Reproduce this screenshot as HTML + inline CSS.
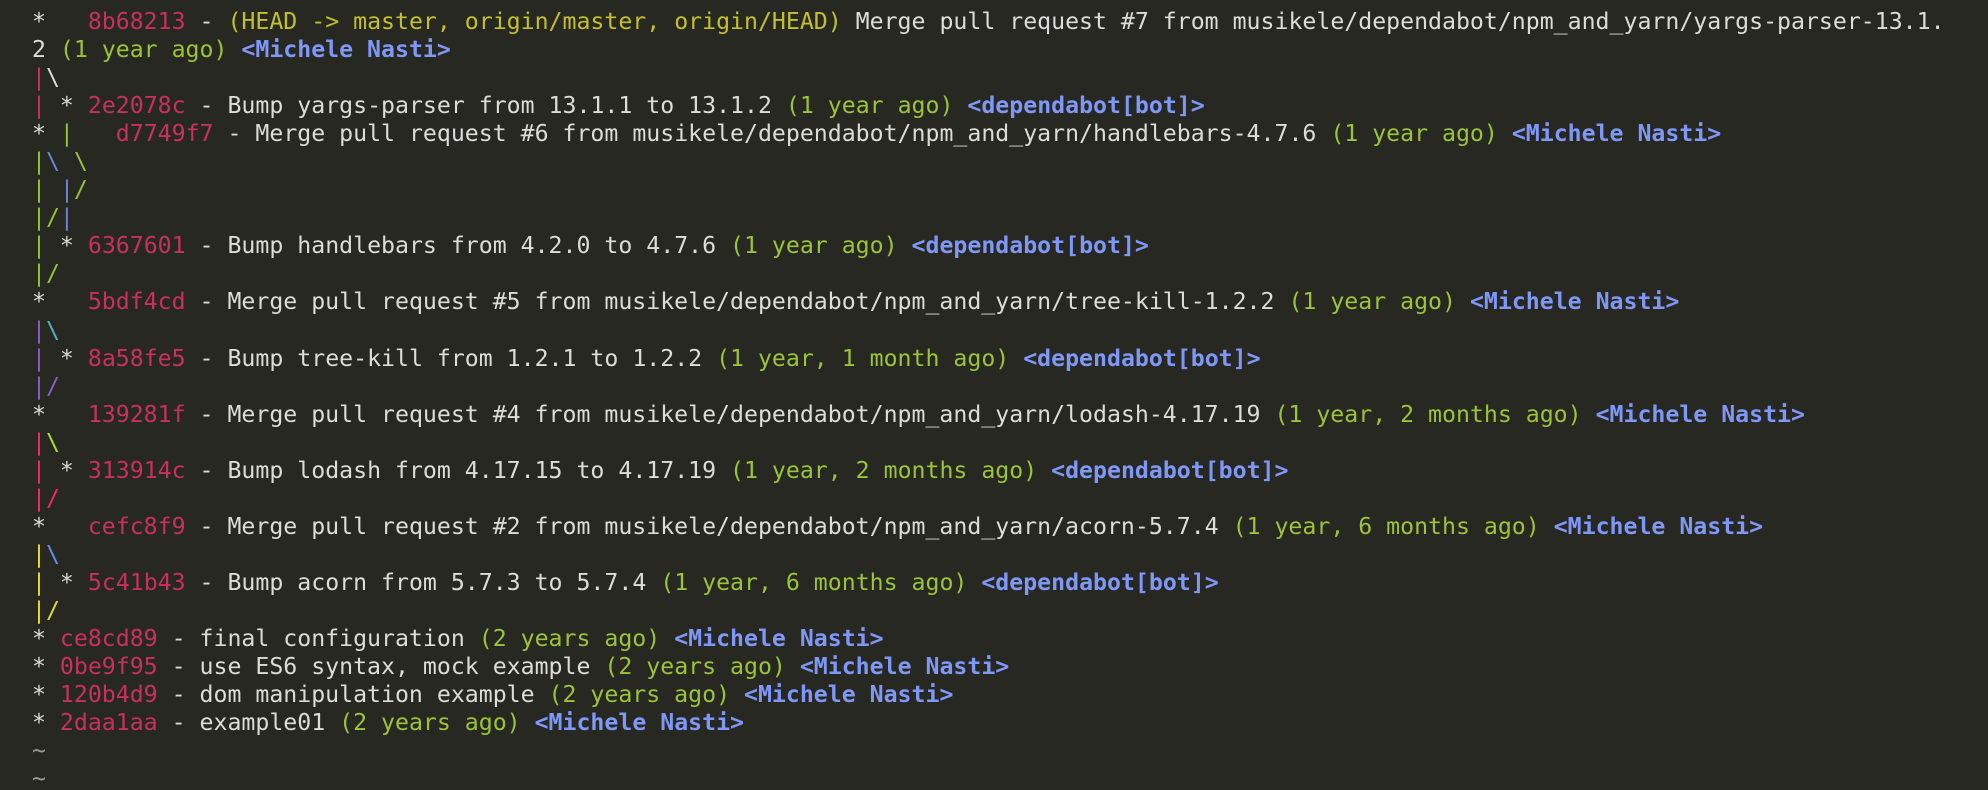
<!DOCTYPE html>
<html><head><meta charset="utf-8"><style>
html,body{margin:0;padding:0;background:#272822;width:1988px;height:790px;overflow:hidden}
pre{margin:0;padding:8px 0 0 32px;font-family:"DejaVu Sans Mono","Liberation Mono",monospace;font-size:23.2px;line-height:28.05px;color:#dcdcd8;white-space:pre}
.h{color:#c9305f}.d{color:#9bc43a}.a{color:#7f97f7;font-weight:bold}.y{color:#c4c02c}
.r{color:#c9305f}.g{color:#94c23a}.b{color:#6a85d8}.p{color:#8a5cc4}.c{color:#4fb4c4}.R{color:#f0286a}.G{color:#a6e22e}.Y{color:#e2dc30}.B{color:#6b8cf0}.t{color:#9a9a9a}
</style></head><body><pre>*   <span class="h">8b68213</span> - <span class="y">(HEAD -&gt; master, origin/master, origin/HEAD)</span> Merge pull request #7 from musikele/dependabot/npm_and_yarn/yargs-parser-13.1.
2 <span class="d">(1 year ago)</span> <span class="a">&lt;Michele Nasti&gt;</span>
<span class="r">|</span>\
<span class="r">|</span> * <span class="h">2e2078c</span> - Bump yargs-parser from 13.1.1 to 13.1.2 <span class="d">(1 year ago)</span> <span class="a">&lt;dependabot[bot]&gt;</span>
* <span class="g">|</span>   <span class="h">d7749f7</span> - Merge pull request #6 from musikele/dependabot/npm_and_yarn/handlebars-4.7.6 <span class="d">(1 year ago)</span> <span class="a">&lt;Michele Nasti&gt;</span>
<span class="g">|</span><span class="b">\</span> <span class="g">\</span>
<span class="g">|</span> <span class="b">|</span><span class="g">/</span>
<span class="g">|/</span><span class="b">|</span>
<span class="g">|</span> * <span class="h">6367601</span> - Bump handlebars from 4.2.0 to 4.7.6 <span class="d">(1 year ago)</span> <span class="a">&lt;dependabot[bot]&gt;</span>
<span class="g">|/</span>
*   <span class="h">5bdf4cd</span> - Merge pull request #5 from musikele/dependabot/npm_and_yarn/tree-kill-1.2.2 <span class="d">(1 year ago)</span> <span class="a">&lt;Michele Nasti&gt;</span>
<span class="p">|</span><span class="c">\</span>
<span class="p">|</span> * <span class="h">8a58fe5</span> - Bump tree-kill from 1.2.1 to 1.2.2 <span class="d">(1 year, 1 month ago)</span> <span class="a">&lt;dependabot[bot]&gt;</span>
<span class="p">|/</span>
*   <span class="h">139281f</span> - Merge pull request #4 from musikele/dependabot/npm_and_yarn/lodash-4.17.19 <span class="d">(1 year, 2 months ago)</span> <span class="a">&lt;Michele Nasti&gt;</span>
<span class="R">|</span><span class="G">\</span>
<span class="R">|</span> * <span class="h">313914c</span> - Bump lodash from 4.17.15 to 4.17.19 <span class="d">(1 year, 2 months ago)</span> <span class="a">&lt;dependabot[bot]&gt;</span>
<span class="R">|/</span>
*   <span class="h">cefc8f9</span> - Merge pull request #2 from musikele/dependabot/npm_and_yarn/acorn-5.7.4 <span class="d">(1 year, 6 months ago)</span> <span class="a">&lt;Michele Nasti&gt;</span>
<span class="Y">|</span><span class="B">\</span>
<span class="Y">|</span> * <span class="h">5c41b43</span> - Bump acorn from 5.7.3 to 5.7.4 <span class="d">(1 year, 6 months ago)</span> <span class="a">&lt;dependabot[bot]&gt;</span>
<span class="Y">|/</span>
* <span class="h">ce8cd89</span> - final configuration <span class="d">(2 years ago)</span> <span class="a">&lt;Michele Nasti&gt;</span>
* <span class="h">0be9f95</span> - use ES6 syntax, mock example <span class="d">(2 years ago)</span> <span class="a">&lt;Michele Nasti&gt;</span>
* <span class="h">120b4d9</span> - dom manipulation example <span class="d">(2 years ago)</span> <span class="a">&lt;Michele Nasti&gt;</span>
* <span class="h">2daa1aa</span> - example01 <span class="d">(2 years ago)</span> <span class="a">&lt;Michele Nasti&gt;</span>
<span class="t">~</span>
<span class="t">~</span></pre></body></html>
